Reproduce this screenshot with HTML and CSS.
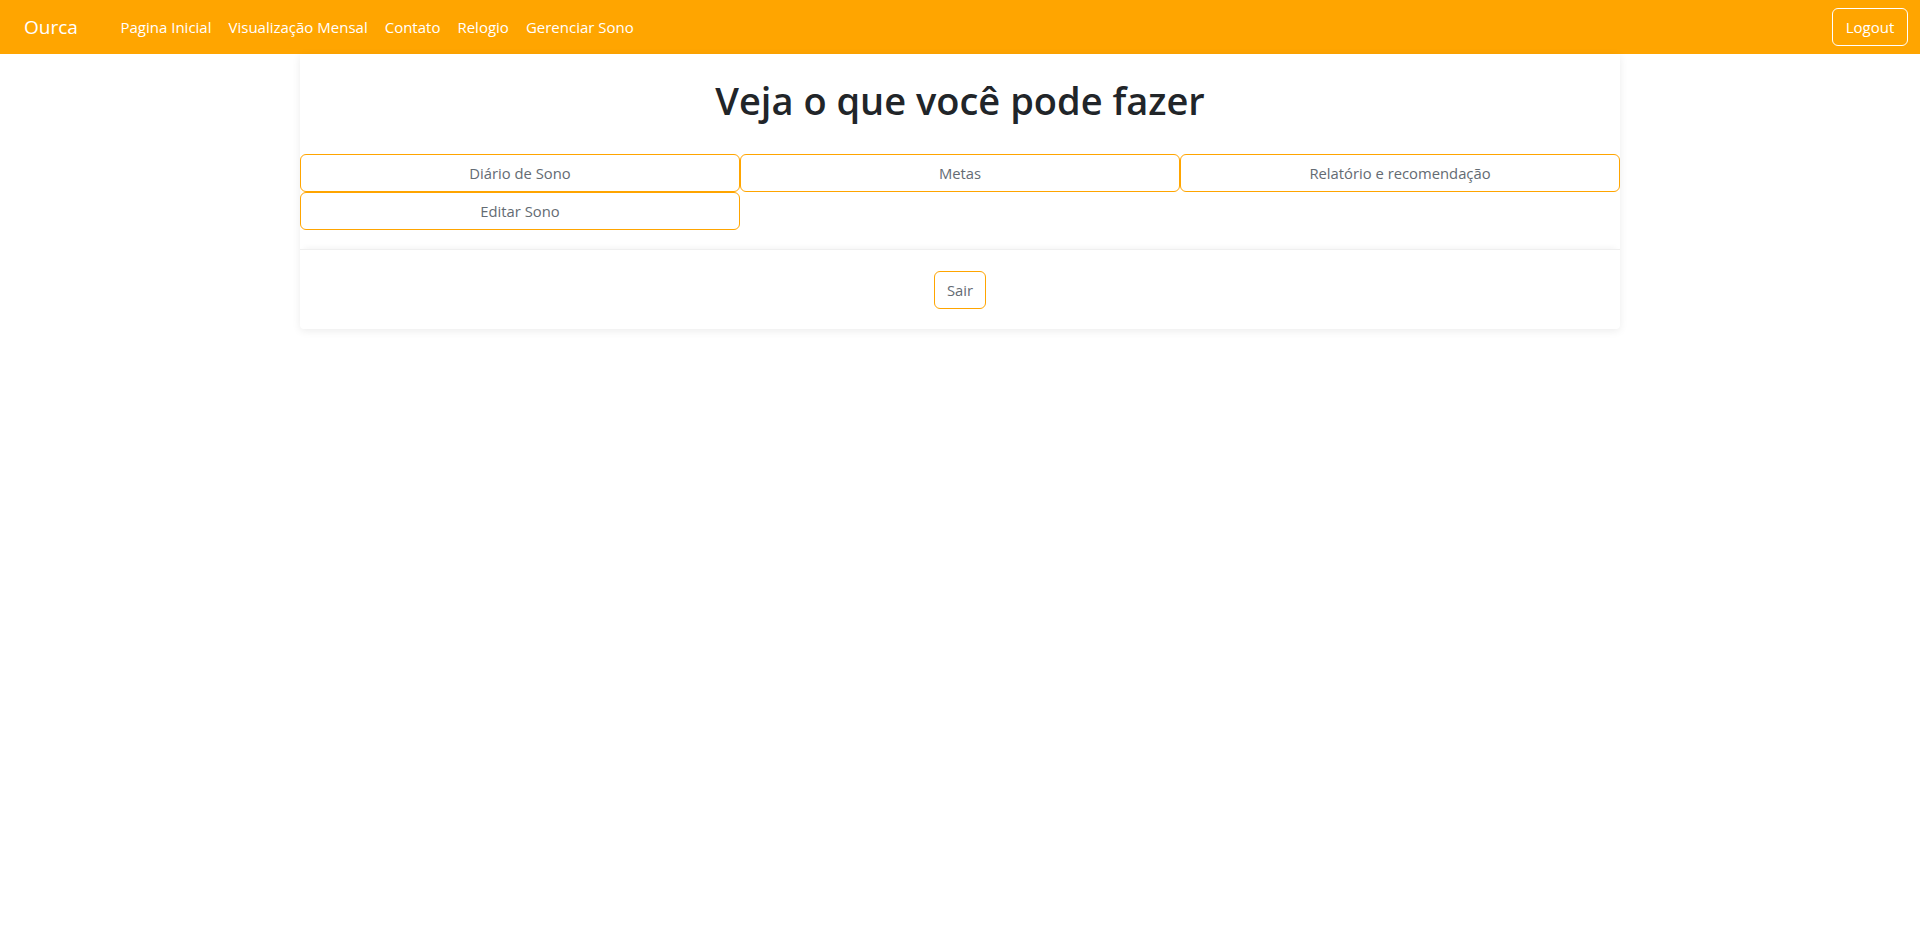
FILE: index.html
```html
<!DOCTYPE html>
<html lang="pt-BR">
<head>
<meta charset="utf-8">
<title>Ourca</title>
<link rel="stylesheet" href="styles.css">
</head>
<body>
<nav class="navbar">
  <a class="brand" href="#">Ourca</a>
  <ul class="nav-links">
    <li><a class="nav-link" href="#">Pagina Inicial</a></li>
    <li><a class="nav-link" href="#">Visualização Mensal</a></li>
    <li><a class="nav-link" href="#">Contato</a></li>
    <li><a class="nav-link" href="#">Relogio</a></li>
    <li><a class="nav-link" href="#">Gerenciar Sono</a></li>
  </ul>
  <button class="btn btn-logout">Logout</button>
</nav>
<main class="card">
  <section class="card-body">
    <h1 class="title">Veja o que você pode fazer</h1>
    <div class="actions">
      <button class="btn btn-action">Diário de Sono</button>
      <button class="btn btn-action">Metas</button>
      <button class="btn btn-action">Relatório e recomendação</button>
      <button class="btn btn-action">Editar Sono</button>
    </div>
  </section>
  <footer class="card-footer">
    <button class="btn btn-action btn-sair">Sair</button>
  </footer>
</main>
</body>
</html>
```

FILE: styles.css
```css
* { box-sizing: border-box; }
html, body { margin: 0; padding: 0; background: #fff; }
body {
  min-height: 100vh;
  font-family: "Open Sans", "Noto Sans", "Liberation Sans", sans-serif;
  font-size: 16px;
  color: #212529;
}
.navbar {
  display: flex;
  align-items: center;
  height: 54px;
  padding: 8px 12px;
  background: #ffa500;
}
.brand {
  display: block;
  width: 100px;
  padding-left: 12px;
  color: #fff;
  font-size: 19px;
  text-decoration: none;
  line-height: 30px;
}
.nav-links {
  display: flex;
  list-style: none;
  margin: 0;
  padding: 0;
  flex: 1;
}
.nav-link {
  display: block;
  padding: 8px 8.5px;
  color: #fff;
  text-decoration: none;
  font-size: 15px;
  line-height: 22px;
}
.btn {
  font-family: inherit;
  background: transparent;
  border: 1px solid #ffa500;
  border-radius: 6px;
  cursor: pointer;
  height: 38px;
  font-size: 14.8px;
  line-height: 22px;
  padding: 7px 12px;
}
.btn-logout {
  width: 76px;
  padding: 7px 0;
  color: #fff;
  border-color: #fff;
  font-size: 15px;
}
.card {
  width: 1320px;
  margin: 0 auto;
  background: #fff;
  box-shadow: 0 2px 8px rgba(0, 0, 0, 0.08);
  border-radius: 0 0 4px 4px;
}
.card-body {
  padding: 22px 0 19px;
}
.title {
  margin: 0 0 30px;
  text-align: center;
  font-size: 38px;
  font-weight: 600;
  line-height: 48px;
  color: #212529;
}
.actions {
  display: grid;
  grid-template-columns: repeat(3, 1fr);
}
.btn-action {
  width: 100%;
  color: #646b73;
  background: #fff;
}
.card-footer {
  display: flex;
  justify-content: center;
  padding: 21px 0 20px;
  border-top: 1px solid #efefef;
  border-radius: 0 0 4px 4px;
  box-shadow: 0 -5px 6px -4px rgba(0, 0, 0, 0.05);
}
.btn-sair {
  width: 52px;
  padding: 7px 0;
}
```
